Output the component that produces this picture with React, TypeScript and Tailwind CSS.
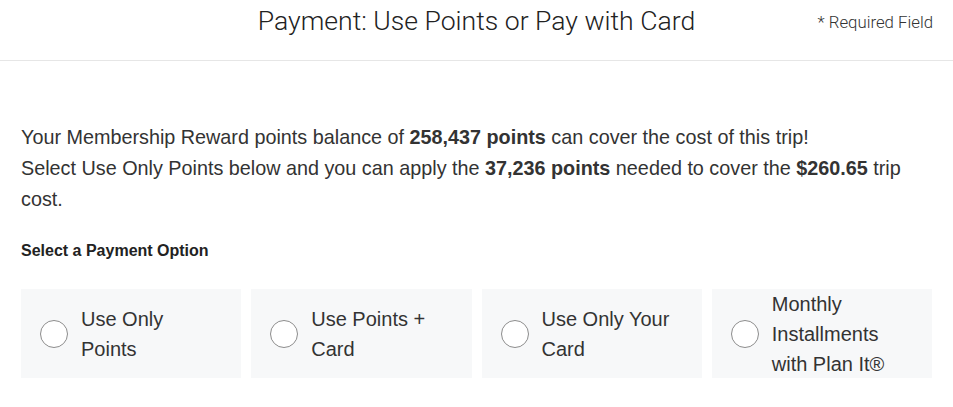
const options = [
  "Use Only Points",
  "Use Points + Card",
  "Use Only Your Card",
  "Monthly Installments with Plan It®",
];

function RadioCard({ label }: { label: string }) {
  return (
    <label className="flex h-[89px] items-center bg-[#f7f8f9] pl-[19px] pr-[20px]">
      <span className="h-[28px] w-[28px] shrink-0 rounded-full border border-[#8c8c8c] bg-white" />
      <span className="ml-[13px] text-[20px] leading-[30px] text-[#333]">{label}</span>
    </label>
  );
}

export default function App() {
  return (
    <main className="min-h-screen bg-white font-['Liberation_Sans',Arial,sans-serif] text-[#333]">
      {/* Header */}
      <header className="relative h-[61px] border-b border-[#e6e6e6]">
        <h1 className="pt-[1px] text-center font-['Roboto',sans-serif] text-[26.6px] font-light text-[#222]">
          Payment: Use Points or Pay with Card
        </h1>
        <span className="absolute right-[20px] top-[10px] font-['Roboto',sans-serif] text-[16.8px] font-light text-[#333]">
          * Required Field
        </span>
      </header>

      <section className="px-[21px] pt-[61px]">
        <p className="text-[19.8px] leading-[31px]">
          Your Membership Reward points balance of <strong>258,437 points</strong> can cover the cost of this
          trip!
          <br />
          Select Use Only Points below and you can apply the <strong>37,236 points</strong> needed to cover
          the <strong>$260.65</strong> trip cost.
        </p>

        <h2 className="mt-[24px] text-[16px] font-bold text-[#222]">Select a Payment Option</h2>

        <div className="mt-[26px] grid grid-cols-4 gap-[10px]">
          {options.map((o) => (
            <RadioCard key={o} label={o} />
          ))}
        </div>
      </section>
    </main>
  );
}
